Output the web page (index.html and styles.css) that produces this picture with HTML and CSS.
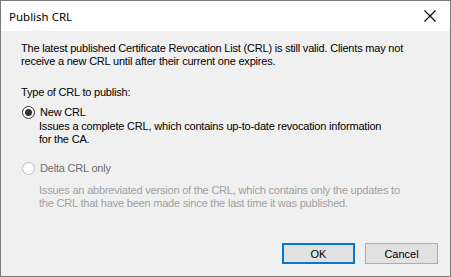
FILE: index.html
```html
<!DOCTYPE html>
<html lang="en">

<head>
    <meta charset="UTF-8">
    <title>Publish CRL</title>
    <link rel="stylesheet" href="styles.css">
</head>

<body>
    <div class="window">
        <div class="titlebar">
            <span class="title">Publish CRL</span>
            <svg class="close" width="12" height="12" viewBox="0 0 12 12">
                <path d="M0.5 0.5 L11.5 11.5 M11.5 0.5 L0.5 11.5" stroke="#000" stroke-width="1.1" fill="none" />
            </svg>
        </div>

        <div class="content">
            <p class="intro">The latest published Certificate Revocation List (CRL) is still valid. Clients may not
                <br>receive a new CRL until after their current one expires.</p>

            <p class="label">Type of CRL to publish:</p>

            <!-- New CRL -->
            <div class="option">
                <span class="radio checked"></span>
                <span class="option-name">New CRL</span>
            </div>
            <p class="desc">Issues a complete CRL, which contains up-to-date revocation information
                <br>for the CA.</p>

            <!-- Delta CRL -->
            <div class="option disabled">
                <span class="radio"></span>
                <span class="option-name">Delta CRL only</span>
            </div>
            <p class="desc disabled">Issues an abbreviated version of the CRL, which contains only the updates to
                <br>the CRL that have been made since the last time it was published.</p>
        </div>

        <div class="buttons">
            <button class="btn default">OK</button>
            <button class="btn">Cancel</button>
        </div>
    </div>
</body>

</html>
```

FILE: styles.css
```css
body {
    margin: 0;
    padding: 0;
    font-family: "Liberation Sans", Arial, sans-serif;
    font-size: 11px;
    letter-spacing: -0.2px;
    color: #000;
}

.window {
    width: 451px;
    height: 277px;
    box-sizing: border-box;
    border: 1px solid #7a7a7a;
    background-color: #f0f0f0;
    display: flex;
    flex-direction: column;
}

.titlebar {
    height: 30px;
    background-color: white;
    display: flex;
    align-items: center;
    justify-content: space-between;
    padding: 0 14px 0 8px;
}

.title {
    font-family: "Noto Sans", sans-serif;
    font-size: 11.5px;
    letter-spacing: 0;
}

.content {
    flex: 1;
    padding: 11px 20px 0 20px;
}

.content p {
    margin: 0;
    line-height: 13px;
}

.intro {
    margin-bottom: 18px !important;
}

.label {
    margin-bottom: 6px !important;
}

.option {
    display: flex;
    align-items: center;
    height: 14px;
    margin-left: 1px;
}

.radio {
    width: 11px;
    height: 11px;
    border: 1px solid #333;
    border-radius: 50%;
    background-color: white;
    position: relative;
    margin-right: 5px;
}

.radio.checked::after {
    content: "";
    position: absolute;
    left: 2px;
    top: 2px;
    width: 7px;
    height: 7px;
    border-radius: 50%;
    background-color: #333;
}

.option.disabled .radio {
    border-color: #bcbcbc;
}

.option.disabled .option-name {
    color: #6d6d6d;
}

.desc {
    padding-left: 18px;
    margin-top: 1px !important;
    margin-bottom: 15px !important;
}

.desc.disabled {
    color: #a0a0a0;
    margin-top: 9px !important;
}

.buttons {
    display: flex;
    justify-content: flex-end;
    gap: 10px;
    padding: 0 12px 12px 0;
}

.btn {
    width: 73px;
    height: 21px;
    background-color: #e1e1e1;
    border: 1px solid #adadad;
    font-family: "Liberation Sans", Arial, sans-serif;
    font-size: 11px;
    color: #000;
    padding: 0;
}

.btn.default {
    border: 2px solid #0078d7;
}
```
